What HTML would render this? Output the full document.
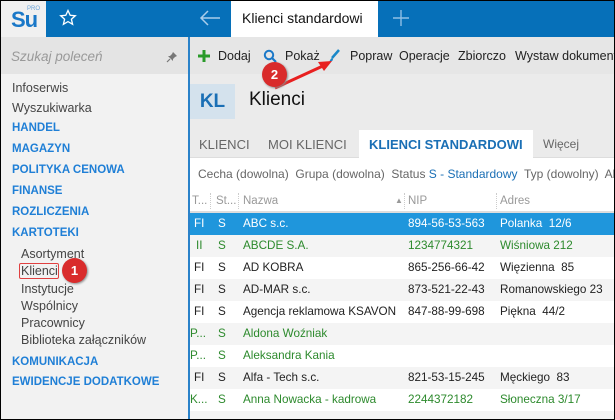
<!DOCTYPE html>
<html><head><meta charset="utf-8"><style>
*{margin:0;padding:0;box-sizing:border-box}
body{width:615px;height:420px;overflow:hidden;font-family:"Liberation Sans",sans-serif;font-size:12px;color:#222;position:relative;background:#fff}
.a{position:absolute;white-space:nowrap}
.frame{position:absolute;left:0;top:0;width:615px;height:420px;border:1px solid #000;pointer-events:none}
.sec{color:#1f7fd6;font-weight:bold;font-size:11.5px}
.it{color:#444;font-size:12.5px}
.row{position:absolute;left:190px;width:425px;height:22px;font-size:11.7px;line-height:22px}
.row span{position:absolute}
.g{color:#2d8a2d}
</style></head><body>
<div class="a" style="left:0;top:0;width:46px;height:37px;background:#f0f0f0"></div>
<div class="a" style="left:11px;top:7px;font-size:22px;font-weight:bold;color:#1a78c8;letter-spacing:-1px">Su</div>
<div class="a" style="left:27px;top:6px;font-size:6px;color:#6aa3d8">PRO</div>
<div class="a" style="left:46px;top:0;width:185px;height:37px;background:#0670b9"></div>
<svg class="a" style="left:59px;top:9px" width="18" height="18" viewBox="0 0 18 18"><path d="M9 1.5l2.2 4.8 5.1.5-3.9 3.4 1.2 5.1L9 12.6 4.4 15.3l1.2-5.1L1.7 6.8l5.1-.5z" fill="none" stroke="#fff" stroke-width="1.3"/></svg>
<svg class="a" style="left:199px;top:10px" width="22" height="16" viewBox="0 0 22 16"><path d="M21 8H2M9 1L2 8l7 7" fill="none" stroke="#a9cdeb" stroke-width="1.5"/></svg>
<div class="a" style="left:231px;top:0;width:147px;height:37px;background:#fff"></div>
<div class="a" style="left:242px;top:10px;font-size:14px;color:#111">Klienci standardowi</div>
<div class="a" style="left:378px;top:0;width:237px;height:37px;background:#0670b9"></div>
<svg class="a" style="left:392px;top:9px" width="18" height="18"><path d="M9 1v16M1 9h16" stroke="#8fbfe6" stroke-width="1.4"/></svg>
<div class="a" style="left:0;top:37px;width:188px;height:383px;background:#f2f2f2"></div>
<div class="a" style="left:0;top:37px;width:188px;height:37px;background:#e4e4e4"></div>
<div class="a" style="left:11px;top:49px;font-size:13.5px;font-style:italic;color:#999">Szukaj poleceń</div>
<svg class="a" style="left:166px;top:51px" width="12" height="12" viewBox="0 0 12 12"><path d="M7 1l4 4-2 1-2 2 0 2-5-5 2 0 2-2z" fill="#777"/><path d="M4 8L1 11" stroke="#777" stroke-width="1.2"/></svg>
<div class="a" style="left:188px;top:37px;width:2px;height:383px;background:#2a82c9"></div>
<div class="a it" style="left:12px;top:81px">Infoserwis</div>
<div class="a it" style="left:12px;top:101px">Wyszukiwarka</div>
<div class="a sec" style="left:12px;top:122px">HANDEL</div>
<div class="a sec" style="left:12px;top:143px">MAGAZYN</div>
<div class="a sec" style="left:12px;top:164px">POLITYKA CENOWA</div>
<div class="a sec" style="left:12px;top:185px">FINANSE</div>
<div class="a sec" style="left:12px;top:206px">ROZLICZENIA</div>
<div class="a sec" style="left:12px;top:227px">KARTOTEKI</div>
<div class="a it" style="left:21px;top:247px">Asortyment</div>
<div class="a" style="left:19px;top:263px;width:40px;height:16px;border:1px solid #e04040;border-radius:2px"></div>
<div class="a it" style="left:21px;top:264px">Klienci</div>
<div class="a" style="left:62px;top:258px;width:25px;height:25px;border-radius:50%;background:#d92b2b;color:#fff;font-weight:bold;font-size:13px;text-align:center;line-height:25px;box-shadow:1px 1px 2px #888">1</div>
<div class="a it" style="left:21px;top:282px">Instytucje</div>
<div class="a it" style="left:21px;top:299px">Wspólnicy</div>
<div class="a it" style="left:21px;top:316px">Pracownicy</div>
<div class="a it" style="left:21px;top:333px">Biblioteka załączników</div>
<div class="a sec" style="left:12px;top:356px">KOMUNIKACJA</div>
<div class="a sec" style="left:12px;top:376px">EWIDENCJE DODATKOWE</div>
<div class="a" style="left:190px;top:37px;width:425px;height:93px;background:#ebebeb"></div>
<div class="a" style="left:190px;top:37px;width:425px;height:37px;background:#e6e6e6"></div>
<svg class="a" style="left:197px;top:49px" width="14" height="14"><path d="M7 1v12M1 7h12" stroke="#2a9a2a" stroke-width="3"/></svg>
<div class="a" style="left:218px;top:49px;font-size:12.5px">Dodaj</div>
<svg class="a" style="left:263px;top:49px" width="14" height="14"><circle cx="6" cy="6" r="4.2" fill="none" stroke="#1a78c8" stroke-width="2"/><path d="M9 9l4 4" stroke="#1a78c8" stroke-width="2.2"/></svg>
<div class="a" style="left:285px;top:49px;font-size:12.5px">Pokaż</div>
<svg class="a" style="left:328px;top:49px" width="12" height="14"><path d="M11 1L4 9" stroke="#1a88c8" stroke-width="2.5"/><path d="M4 9c-2 1-2 3-3 4 2 0 4-1 4-3z" fill="#1a88c8"/></svg>
<div class="a" style="left:350px;top:49px;font-size:12.5px">Popraw</div>
<div class="a" style="left:399px;top:49px;font-size:12.5px">Operacje</div>
<div class="a" style="left:458px;top:49px;font-size:12.5px">Zbiorczo</div>
<div class="a" style="left:515px;top:49px;font-size:12.5px">Wystaw dokument</div>
<svg class="a" style="left:270px;top:55px" width="70" height="40"><path d="M5 33L55 10" stroke="#e82020" stroke-width="3"/><path d="M62 6L48 7l6 9z" fill="#e82020"/></svg>
<div class="a" style="left:262px;top:62px;width:25px;height:25px;border-radius:50%;background:#d92b2b;color:#fff;font-weight:bold;font-size:13px;text-align:center;line-height:25px;box-shadow:1px 1px 2px #888">2</div>
<div class="a" style="left:190px;top:84px;width:45px;height:35px;background:#d4e2ed;color:#1a6fb5;font-weight:bold;font-size:19px;text-align:center;line-height:35px">KL</div>
<div class="a" style="left:249px;top:89px;font-size:19px;color:#111">Klienci</div>
<div class="a" style="left:190px;top:130px;width:425px;height:28px;background:#ebebeb;border-bottom:1px solid #ddd"></div>
<div class="a" style="left:199px;top:137px;font-size:13px;color:#666">KLIENCI</div>
<div class="a" style="left:268px;top:137px;font-size:13px;color:#666">MOI KLIENCI</div>
<div class="a" style="left:359px;top:130px;width:174px;height:29px;background:#fff"></div>
<div class="a" style="left:369px;top:137px;font-size:13px;font-weight:bold;color:#1a6fb5">KLIENCI STANDARDOWI</div>
<div class="a" style="left:543px;top:137px;font-size:12px;color:#666">Więcej</div>
<div class="a" style="left:190px;top:159px;width:425px;height:32px;background:#fff"></div>
<div class="a" style="left:198px;top:167px;font-size:12px;color:#666">Cecha (dowolna)&nbsp; Grupa (dowolna)&nbsp; Status <span style="color:#1a6fb5">S - Standardowy</span>&nbsp; Typ (dowolny)&nbsp; Ak</div>
<div class="a" style="left:190px;top:191px;width:425px;height:22px;background:#fff;border-bottom:2px solid #ddd;color:#999;font-size:11.5px;line-height:20px">
<span class="a" style="left:2px">T...</span><span class="a" style="left:26px">St...</span><span class="a" style="left:53px">Nazwa</span><span class="a" style="left:205px;font-size:8px">▲</span><span class="a" style="left:218px">NIP</span><span class="a" style="left:310px">Adres</span>
<span class="a" style="left:20px;top:2px;height:16px;border-left:1px dotted #ccc"></span><span class="a" style="left:48px;top:2px;height:16px;border-left:1px dotted #ccc"></span><span class="a" style="left:214px;top:2px;height:16px;border-left:1px dotted #ccc"></span><span class="a" style="left:306px;top:2px;height:16px;border-left:1px dotted #ccc"></span></div>
<div class="row" style="top:213px;background:#1f96dc;color:#fff"><span style="left:4px">FI</span><span style="left:28px">S</span><span style="left:53px">ABC s.c.</span><span style="left:218px">894-56-53-563</span><span style="left:310px">Polanka&nbsp; 12/6</span></div>
<div class="row g" style="top:235px;background:#f4f4f4"><span style="left:6px">II</span><span style="left:28px">S</span><span style="left:53px">ABCDE S.A.</span><span style="left:218px">1234774321</span><span style="left:310px">Wiśniowa 212</span></div>
<div class="row" style="top:257px"><span style="left:4px">FI</span><span style="left:28px">S</span><span style="left:53px">AD KOBRA</span><span style="left:218px">865-256-66-42</span><span style="left:310px">Więzienna&nbsp; 85</span></div>
<div class="row" style="top:279px;background:#f4f4f4"><span style="left:4px">FI</span><span style="left:28px">S</span><span style="left:53px">AD-MAR s.c.</span><span style="left:218px">873-521-22-43</span><span style="left:310px">Romanowskiego 23</span></div>
<div class="row" style="top:301px"><span style="left:4px">FI</span><span style="left:28px">S</span><span style="left:53px">Agencja reklamowa KSAVON</span><span style="left:218px">847-88-99-698</span><span style="left:310px">Piękna&nbsp; 44/2</span></div>
<div class="row g" style="top:323px;background:#f4f4f4"><span style="left:0">P...</span><span style="left:28px">S</span><span style="left:53px">Aldona Woźniak</span></div>
<div class="row g" style="top:345px"><span style="left:0">P...</span><span style="left:28px">S</span><span style="left:53px">Aleksandra Kania</span></div>
<div class="row" style="top:367px;background:#f4f4f4"><span style="left:4px">FI</span><span style="left:28px">S</span><span style="left:53px">Alfa - Tech s.c.</span><span style="left:218px">821-53-15-245</span><span style="left:310px">Męckiego&nbsp; 83</span></div>
<div class="row g" style="top:389px"><span style="left:0">K...</span><span style="left:28px">S</span><span style="left:53px">Anna Nowacka - kadrowa</span><span style="left:218px">2244372182</span><span style="left:310px">Słoneczna 3/17</span></div>
<div class="a" style="left:190px;top:411px;width:425px;height:9px;background:#f4f4f4"></div>
<div class="frame"></div>
</body></html>
